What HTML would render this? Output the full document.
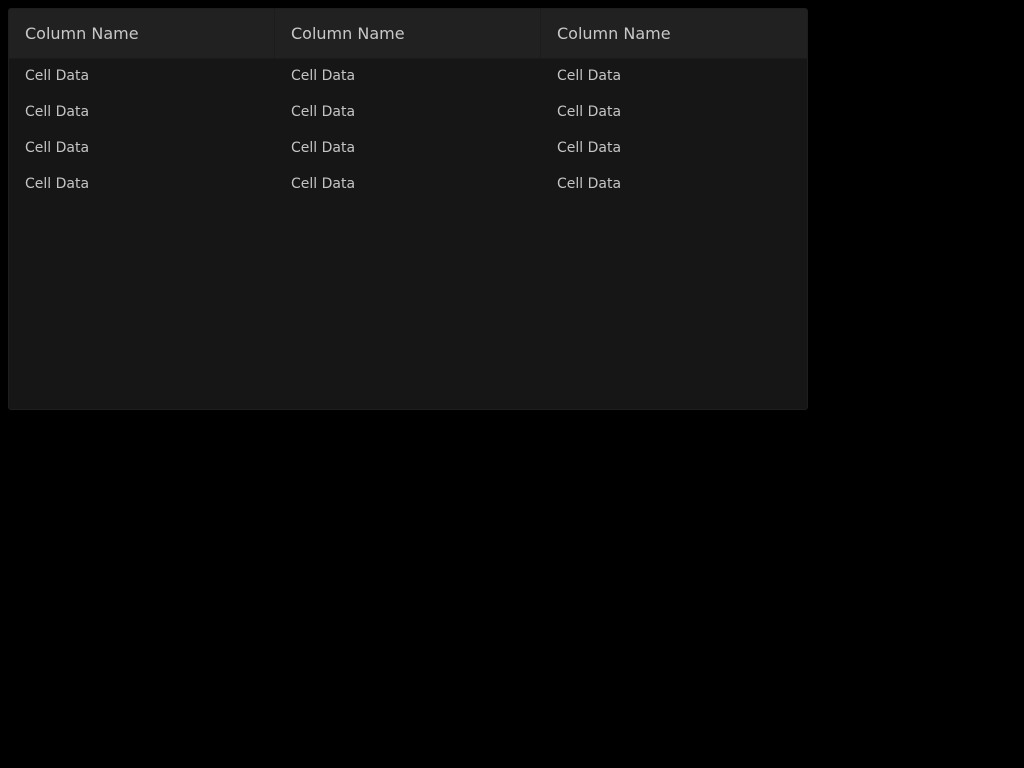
<!DOCTYPE html>
<html><head><style>
body{margin:0;background:#000;font-family:"DejaVu Sans",sans-serif;}
.t{position:absolute;left:8px;top:8px;width:798px;height:400px;background:#161616;border:1px solid #1e1e1e;border-radius:3px;overflow:hidden;}
.h{display:flex;height:49px;background:#212121;border-bottom:1px solid #1a1a1a;}
.h div{width:266px;box-sizing:border-box;padding-left:16px;line-height:50px;font-size:16px;color:#c8c8c8;border-right:1px solid #1c1c1c;}
.h div:last-child{border-right:none}
.r{display:flex;height:36px;}
.r div{width:266px;box-sizing:border-box;padding-left:16px;line-height:34px;font-size:14px;color:#c4c4c4;}
</style></head><body>
<div class="t">
<div class="h"><div>Column Name</div><div>Column Name</div><div>Column Name</div></div>
<div class="r"><div>Cell Data</div><div>Cell Data</div><div>Cell Data</div></div>
<div class="r"><div>Cell Data</div><div>Cell Data</div><div>Cell Data</div></div>
<div class="r"><div>Cell Data</div><div>Cell Data</div><div>Cell Data</div></div>
<div class="r"><div>Cell Data</div><div>Cell Data</div><div>Cell Data</div></div>
</div>
</body></html>
